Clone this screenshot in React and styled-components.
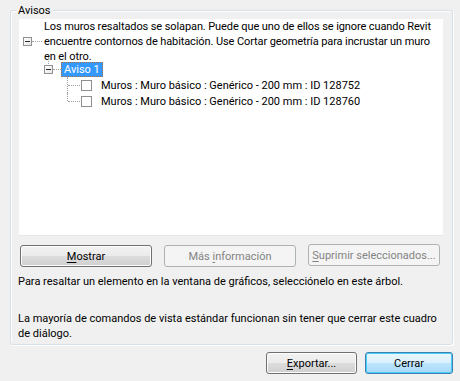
import React from "react";
import styled, { createGlobalStyle } from "styled-components";

const Global = createGlobalStyle`
  html, body { margin: 0; padding: 0; background: #f0f0f0; }
  body {
    width: 460px; height: 381px; overflow: hidden;
    font-family: Roboto, "Liberation Sans", Arial, sans-serif;
    font-size: 11px; color: #000;
  }
`;

const Dialog = styled.div`
  display: flex;
  flex-direction: column;
  padding: 10px 0 0 10px;
  width: 443px;
`;

const Group = styled.section`
  position: relative;
  box-sizing: border-box;
  width: 443px;
  height: 335px;
  border: 1px solid #d5dfe5;
  border-radius: 3px;
  box-shadow: inset 1px 1px 0 #fff, 1px 1px 0 #fff;
  padding: 8px 9px 0 8px;
  display: flex;
  flex-direction: column;
`;

const Legend = styled.span`
  position: absolute;
  top: -7px;
  left: 5px;
  padding: 0 2px;
  line-height: 13px;
  background: #f0f0f0;
`;

const Tree = styled.div`
  box-sizing: border-box;
  height: 217px;
  background: #fff;
  border-bottom: 1px solid #e6e6e6;
  display: flex;
  flex-direction: column;
`;

const RootRow = styled.div`
  box-sizing: border-box;
  display: flex;
  align-items: center;
  padding: 3px 0 0 4px;
  height: 42px;
`;

const Expander = styled.span`
  position: relative;
  box-sizing: border-box;
  width: 9px;
  height: 9px;
  flex: none;
  border: 1px solid #919191;
  background: linear-gradient(135deg, #ffffff 0%, #e6e6e6 100%);
  &::after {
    content: "";
    position: absolute;
    left: 1px;
    top: 3px;
    width: 5px;
    height: 1px;
    background: #2b2b2b;
  }
  ${(p) =>
    p.$stem &&
    `&::before {
      content: "";
      position: absolute;
      left: 3px;
      top: -9px;
      height: 7px;
      border-left: 1px dotted #a0a0a0;
    }`}
`;

const HLine = styled.span`
  flex: none;
  width: ${(p) => p.$w}px;
  height: 0;
  border-top: 1px dotted #a0a0a0;
  margin-right: ${(p) => p.$mr || 0}px;
`;

const RootText = styled.div`
  white-space: nowrap;
  line-height: 15px;
  letter-spacing: -0.1px;
`;

const Row = styled.div`
  display: flex;
  align-items: center;
  height: 16px;
  padding-left: ${(p) => p.$indent}px;
`;

const Selected = styled.span`
  box-sizing: border-box;
  height: 15px;
  line-height: 13px;
  padding: 0 2px 0 2px;
  background: #3399ff;
  color: #fff;
  border: 1px dotted #b07040;
`;

const Guide = styled.span`
  position: relative;
  flex: none;
  align-self: stretch;
  width: 13px;
  &::before {
    content: "";
    position: absolute;
    left: 0;
    top: 0;
    height: ${(p) => (p.$last ? "8px" : "16px")};
    border-left: 1px dotted #a0a0a0;
  }
  &::after {
    content: "";
    position: absolute;
    left: 1px;
    top: 8px;
    width: 12px;
    border-top: 1px dotted #a0a0a0;
  }
`;

const Check = styled.span`
  box-sizing: border-box;
  flex: none;
  width: 11px;
  height: 11px;
  margin: 0 9px 0 1px;
  border: 1px solid #8e8f8f;
  background: #fff;
`;

const ButtonRow = styled.div`
  display: flex;
  gap: 12px;
  align-items: flex-start;
  margin: 9px 0 0 1px;
`;

const Button = styled.button`
  box-sizing: border-box;
  width: ${(p) => p.$w}px;
  height: 22px;
  margin-top: ${(p) => p.$mt || 0}px;
  padding: 0;
  font: inherit;
  border-radius: 3px;
  border: 1px solid ${(p) => (p.$primary ? "#3c7fb1" : p.disabled ? "#adb2b5" : "#707070")};
  color: ${(p) => (p.disabled ? "#838383" : "#000")};
  background: ${(p) =>
    p.disabled
      ? "#f4f4f4"
      : p.$primary
      ? "linear-gradient(#eaf6fd 0%, #d9f0fc 50%, #bee6fd 50%, #a7d9f5 100%)"
      : "linear-gradient(#f2f2f2 0%, #ebebeb 50%, #dddddd 50%, #cfcfcf 100%)"};
  box-shadow: ${(p) => (p.disabled ? "none" : p.$primary ? "inset 0 0 0 1px #48cdf6" : "inset 0 0 0 1px #fcfcfc")};
  u { text-decoration: underline; text-underline-offset: 2px; }
`;

const Hint = styled.p`
  margin: ${(p) => p.$mt}px 0 0 -1px;
  line-height: 15px;
  white-space: nowrap;
`;

const Footer = styled.div`
  display: flex;
  justify-content: flex-end;
  gap: 8px;
  margin-top: 7px;
`;

export default function App() {
  return (
    <>
      <Global />
      <Dialog>
        <Group>
          <Legend>Avisos</Legend>
          <Tree>
            <RootRow>
              <Expander />
              <HLine $w={10} $mr={2} />
              <RootText>
                Los muros resaltados se solapan. Puede que uno de ellos se ignore cuando Revit
                <br />
                encuentre contornos de habitación. Use Cortar geometría para incrustar un muro
                <br />
                en el otro.
              </RootText>
            </RootRow>
            <Row $indent={25}>
              <Expander $stem />
              <HLine $w={8} />
              <Selected>Aviso 1</Selected>
            </Row>
            <Row $indent={48}>
              <Guide />
              <Check />
              <span>Muros : Muro básico : Genérico - 200 mm : ID 128752</span>
            </Row>
            <Row $indent={48}>
              <Guide $last />
              <Check />
              <span>Muros : Muro básico : Genérico - 200 mm : ID 128760</span>
            </Row>
          </Tree>
          <ButtonRow>
            <Button $w={132}>
              <u>M</u>ostrar
            </Button>
            <Button $w={132} disabled>
              Más <u>i</u>nformación
            </Button>
            <Button $w={132} $mt={-1} disabled>
              <u>S</u>uprimir seleccionados...
            </Button>
          </ButtonRow>
          <Hint $mt={7}>
            Para resaltar un elemento en la ventana de gráficos, selecciónelo en este árbol.
          </Hint>
          <Hint $mt={22}>
            La mayoría de comandos de vista estándar funcionan sin tener que cerrar este cuadro
            <br />
            de diálogo.
          </Hint>
        </Group>
        <Footer>
          <Button $w={91}>
            <u>E</u>xportar...
          </Button>
          <Button $w={88} $primary>
            Cerrar
          </Button>
        </Footer>
      </Dialog>
    </>
  );
}
